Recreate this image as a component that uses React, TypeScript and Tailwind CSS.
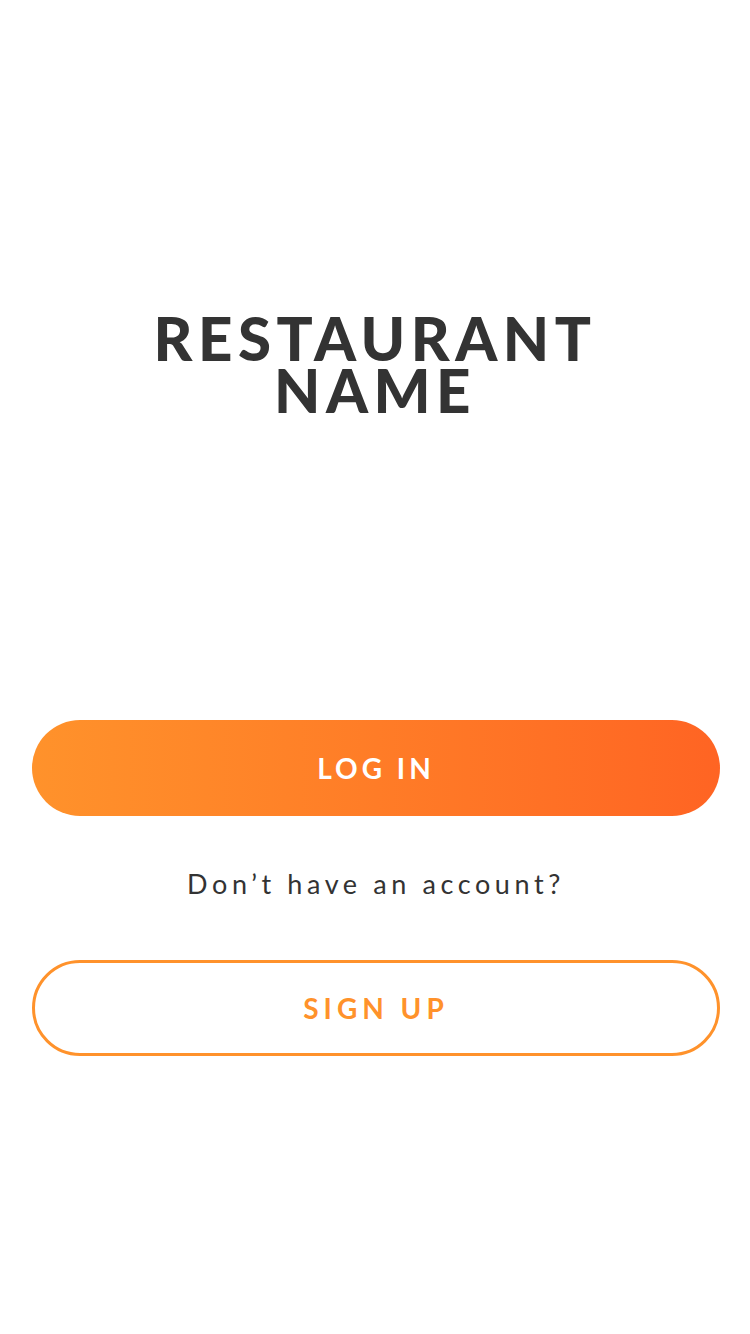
export default function App() {
  return (
    <div className="min-h-[1334px] w-[750px] bg-white flex flex-col items-center font-['Lato',sans-serif]">
      <h1 className="mt-[312px] text-center font-black text-[60px] leading-[52px] tracking-[5.5px] text-[#333333] uppercase">
        <span className="block">Restaurant</span>
        <span className="block">Name</span>
      </h1>
      <div className="mt-[304px] w-full pl-8 pr-[30px] flex flex-col items-center">
        <button className="w-full h-[96px] rounded-full bg-gradient-to-r from-[#ff922b] to-[#ff6423] text-white font-bold text-[28px] tracking-[4px] uppercase">
          Log in
        </button>
        <p className="mt-[50px] text-[27px] leading-[36px] tracking-[4.6px] text-[#333333]">
          Don’t have an account?
        </p>
        <button className="mt-[58px] w-full h-[96px] rounded-full border-[3px] border-[#ff922b] bg-white text-[#ff922b] font-bold text-[28px] tracking-[5px] uppercase">
          Sign up
        </button>
      </div>
    </div>
  );
}
